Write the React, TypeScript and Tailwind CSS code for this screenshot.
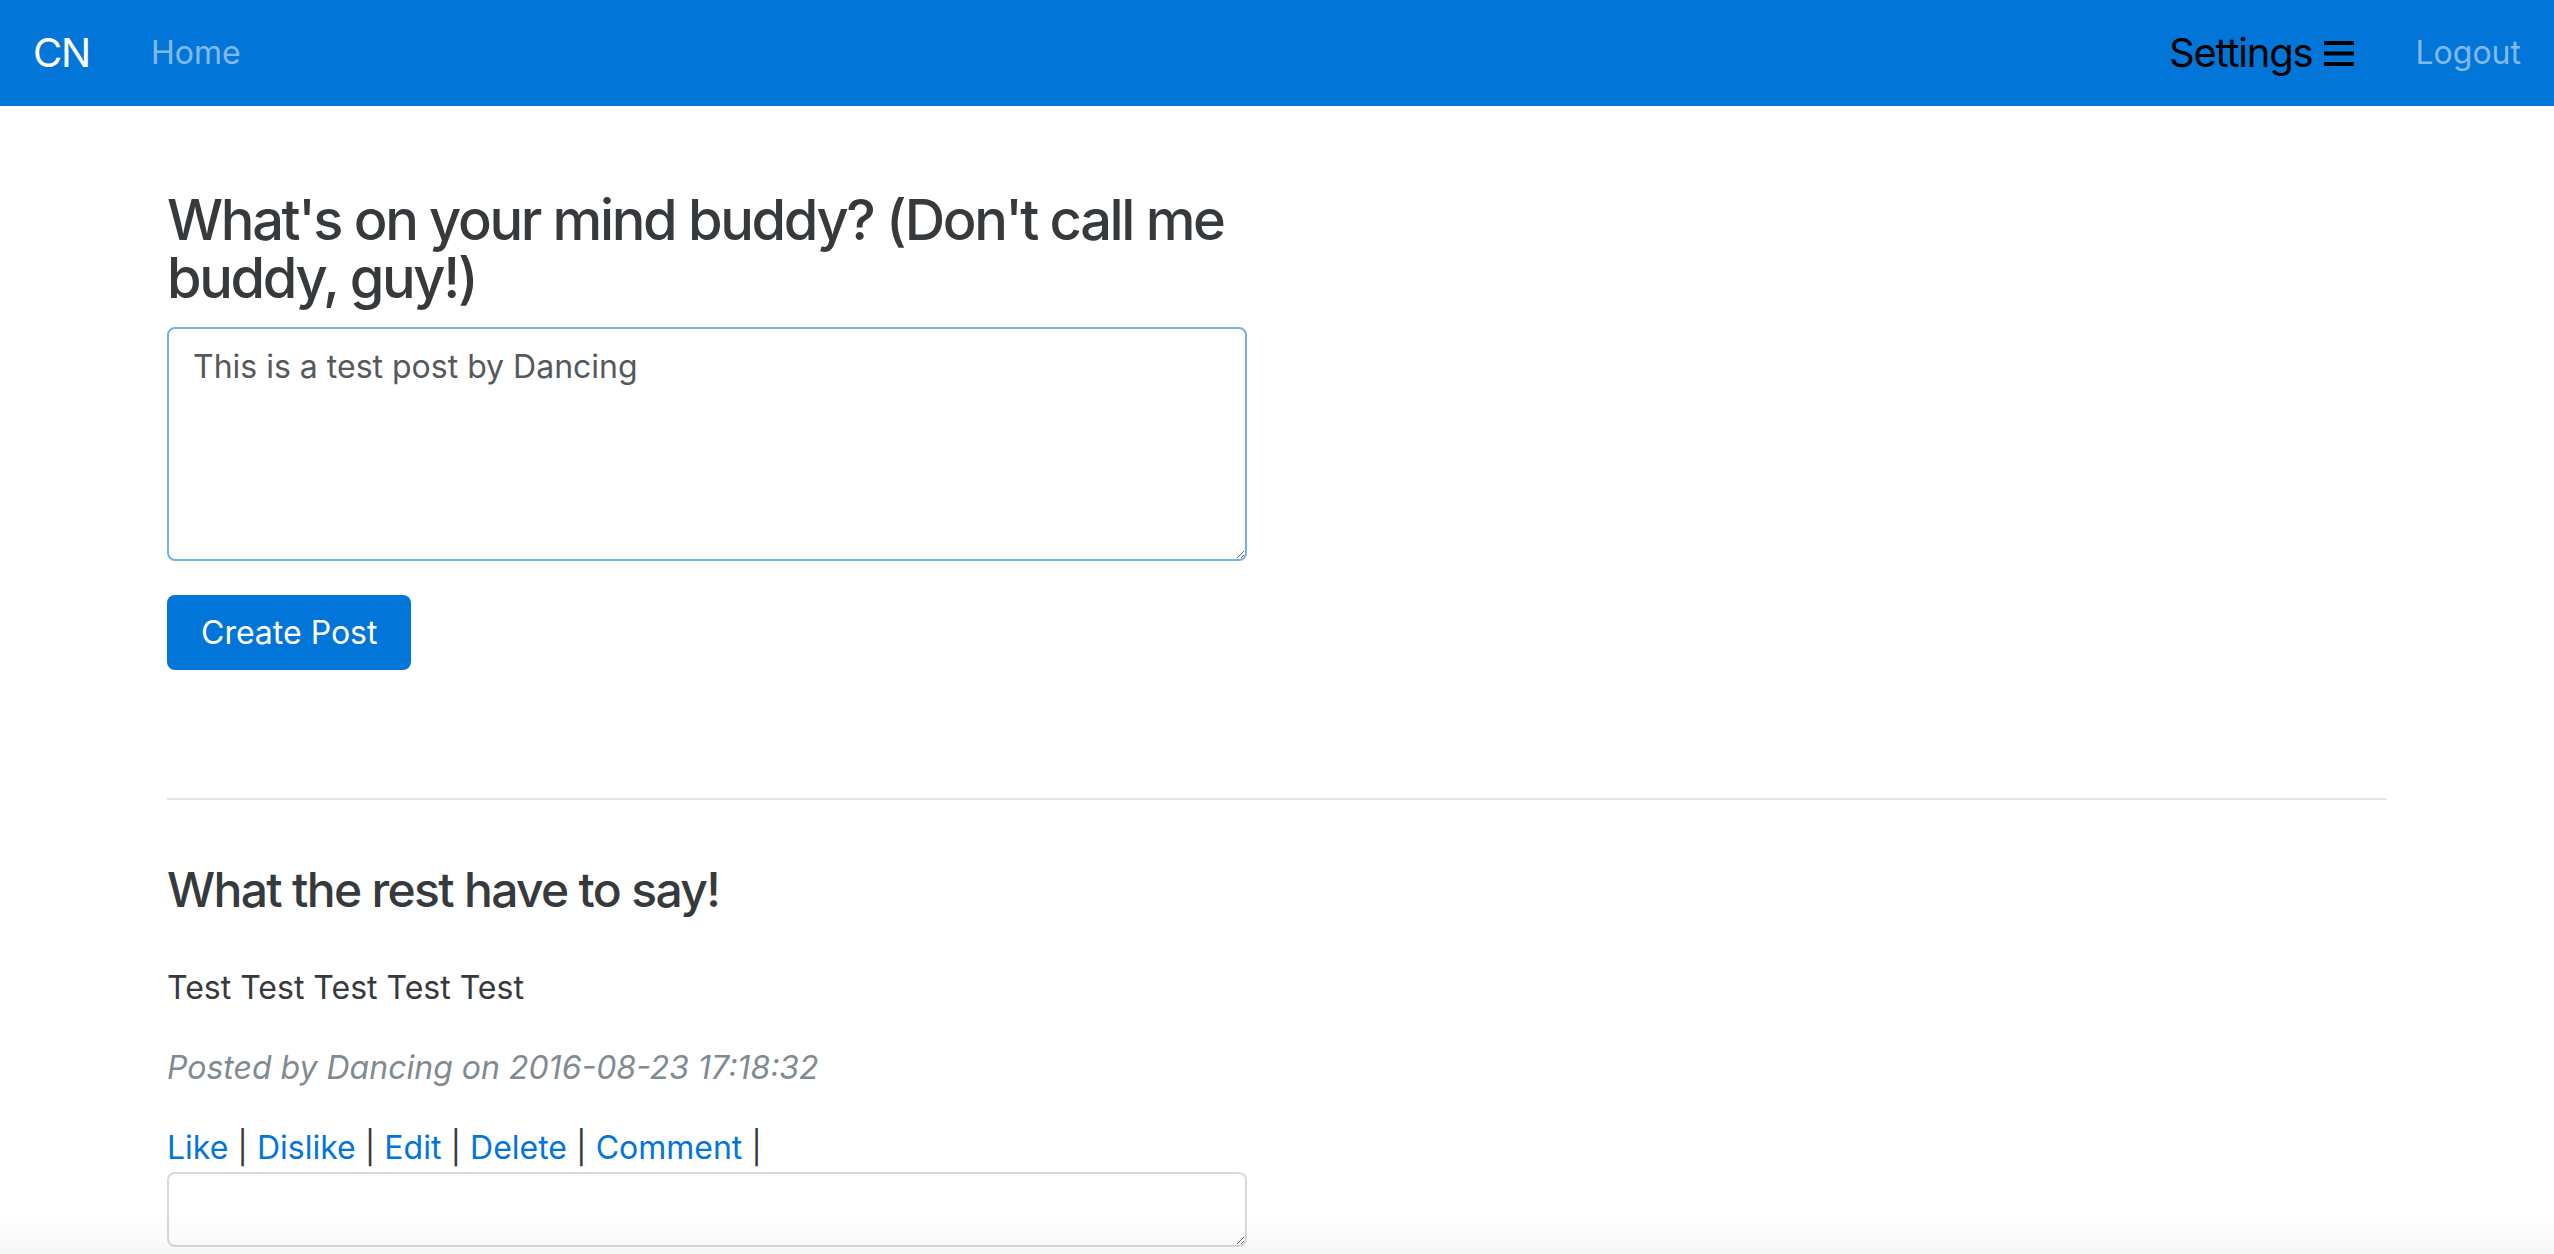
import React from 'react';

const Bars = () => (
  <svg width="30" height="25" viewBox="0 0 30 25" className="ml-[11px]">
    <rect x="0" y="0" width="30" height="4" fill="#000" />
    <rect x="0" y="10.5" width="30" height="4" fill="#000" />
    <rect x="0" y="21" width="30" height="4" fill="#000" />
  </svg>
);

const App = () => {
  const actions = ['Like', 'Dislike', 'Edit', 'Delete', 'Comment'];

  return (
    <div className="min-h-screen bg-white text-[#373a3c] font-['Inter',sans-serif]">
      {/* Navbar */}
      <nav className="h-[106px] bg-[#0275d8] px-[33px] flex items-center">
        <a href="#" className="text-[40px] leading-none tracking-[-0.03em] text-white">CN</a>
        <a href="#" className="ml-[61px] text-[32px] leading-none text-white/50">Home</a>
        <div className="ml-auto flex items-center">
          <a href="#" className="flex items-center text-[40px] leading-none tracking-[-0.03em] text-black">
            Settings
            <Bars />
          </a>
          <a href="#" className="ml-[62px] text-[32px] leading-none text-white/50">Logout</a>
        </div>
      </nav>

      <div className="mx-auto w-[2280px] px-[30px]">
        {/* New post */}
        <section className="w-[1080px] flex flex-col">
          <h3 className="mt-[85px] text-[56px] leading-[58px] font-medium tracking-[-0.042em]">
            What's on your mind buddy? (Don't call me buddy, guy!)
          </h3>
          <textarea
            className="mt-[20px] h-[234px] w-full rounded-[8px] border-2 border-[#72b3e6] px-[24px] py-[14px] text-[32px] leading-[48px] text-[#55595c] outline-none"
            defaultValue="This is a test post by Dancing"
          />
          <div className="mt-[34px]">
            <button className="h-[75px] rounded-[8px] bg-[#0275d8] px-[34px] text-[32px] text-white">
              Create Post
            </button>
          </div>
        </section>

        <hr className="mt-[128px] border-t-2 border-[#e6e6e6]" />

        {/* Feed */}
        <section className="w-[1080px] flex flex-col">
          <h4 className="mt-[63px] text-[48px] leading-[53px] font-medium tracking-[-0.035em]">What the rest have to say!</h4>
          <p className="mt-[48px] text-[32px] leading-[48px]">Test Test Test Test Test</p>
          <p className="mt-[32px] text-[32px] leading-[48px] italic text-[#818a91]">
            Posted by Dancing on 2016-08-23 17:18:32
          </p>
          <div className="mt-[32px] text-[32px] leading-[48px]">
            {actions.map((a) => (
              <span key={a}>
                <a href="#" className="text-[#0275d8]">{a}</a>
                {' | '}
              </span>
            ))}
          </div>
          <textarea className="h-[75px] w-full rounded-[8px] border-2 border-[#d9d9d9] px-[24px] py-[14px] text-[32px] text-[#55595c] outline-none" />
        </section>
      </div>

      {/* bottom fade */}
      <div className="pointer-events-none fixed bottom-0 left-0 right-0 h-[40px] bg-gradient-to-b from-transparent to-black/[0.03]" />
    </div>
  );
};

export default App;
